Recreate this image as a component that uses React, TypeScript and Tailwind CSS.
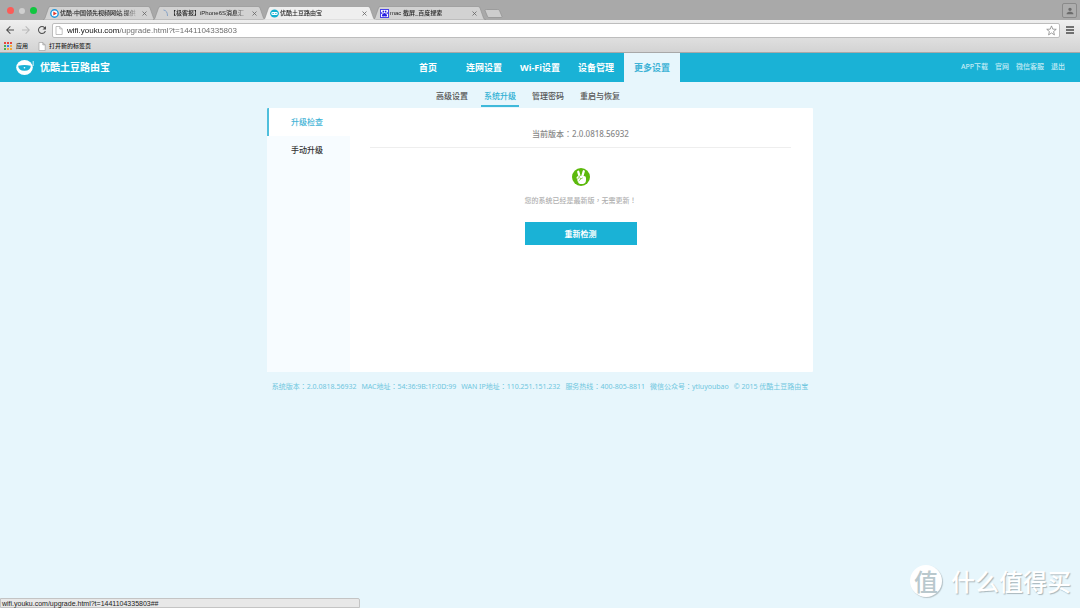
import React from "react";
import type { ReactNode } from "react";
import { MdArrowBack, MdArrowForward, MdRefresh, MdPerson } from "react-icons/md";
import { FaPaw } from "react-icons/fa";

const navItems = ["首页", "连网设置", "Wi-Fi设置", "设备管理", "更多设置"];
const subItems = ["高级设置", "系统升级", "管理密码", "重启与恢复"];
const topLinks = ["APP下载", "官网", "微信客服", "退出"];
const footerItems = [
  ["系统版本", "2.0.0818.56932"],
  ["MAC地址", "54:36:9B:1F:0D:99"],
  ["WAN IP地址", "110.251.151.232"],
  ["服务热线", "400-805-8811"],
  ["微信公众号", "ytluyoubao"],
];
const appDots = [
  "#e8453c", "#e8453c", "#e8453c",
  "#4caf50", "#3f7fe8", "#f2a93b",
  "#4caf50", "#f2a93b", "#f2a93b",
];

/* Punctuation centred in its em box */
function Mark({ children }: { children: string }) {
  return <span className="font-['Noto_Sans_CJK_TC',sans-serif] leading-none">{children}</span>;
}

function RobotFace({ className }: { className: string }) {
  return (
    <svg viewBox="0 0 18 16" className={className} aria-hidden="true">
      <ellipse cx="8.5" cy="7.500" rx="8.3" ry="7.5" fill="#fff" />
      <path d="M17.2 1v5" stroke="#fff" strokeWidth="0.8" />
      <path d="M2.200 5.700Q8.500 4.300 14.800 5.700Q14.600 10.700 8.500 10.700Q2.400 10.700 2.200 5.700Z" fill="#1ab2d6" />
      <circle cx="8.500" cy="7.700" r="0.8" fill="#fff" />
    </svg>
  );
}

function VictoryHand() {
  return (
    <svg viewBox="0 0 36 36" className="mt-5 size-[18px]" aria-hidden="true">
      <circle cx="18" cy="18" r="18" fill="#5cb90c" />
      <path d="M15.500 18L12.500 7.500M20.500 17L23.500 6.500" stroke="#fff" strokeWidth="4.600" strokeLinecap="round" />
      <path d="M9 19.500Q9 16 13 16H24Q28 16 28 20V24Q28 31 22 32H16Q13 31 11.500 27Z" fill="#fff" />
      <path d="M10.500 22.500L14.500 19L18 21.500L14 25.500M18 21.500L21 20M13 18L16.500 15.500" fill="none" stroke="#5cb90c" strokeWidth="1.300" strokeLinecap="round" />
    </svg>
  );
}

function PageIcon() {
  return (
    <svg viewBox="0 0 8 9" className="h-[9px] w-2 shrink-0" aria-hidden="true">
      <path d="M1 .5h3.8l2.4 2.4v5.6H1zM4.8.5v2.4h2.4" fill="#fff" stroke="#999" strokeWidth="0.6" />
    </svg>
  );
}

function Tab({ title, icon, active = false }: { title: string; icon: ReactNode; active?: boolean }) {
  return (
    <div className={`relative -mr-[3px] h-[14px] w-[113px] ${active ? "z-10" : ""}`}>
      <svg viewBox="0 0 113 14" preserveAspectRatio="none" className="absolute inset-0 h-full w-full" aria-hidden="true">
        <path
          d="M0 14Q1.5 13.5 2 12L5.5 2Q6 .5 7.5 .5H105Q106.500 .5 107 2L110.500 12Q111 13.500 113 14Z"
          fill={active ? "#efefef" : "#d2d2d2"}
          stroke="#8f8f8f"
          strokeWidth="0.6"
        />
        {active && <path d="M0 14H113" stroke="#efefef" strokeWidth="1" />}
      </svg>
      <div className="relative flex h-full items-center px-[7px]">
        <span className="flex w-[9px] shrink-0 justify-center">{icon}</span>
        <span className="min-w-0 flex-1 overflow-hidden pl-px text-[6px] leading-[10px] font-medium whitespace-nowrap text-[#222] [mask-image:linear-gradient(to_right,#000_80%,transparent_100%)]">
          {title}
        </span>
        <button aria-label="关闭标签页" className="flex w-[10px] shrink-0 justify-center">
          <svg viewBox="0 0 5 5" className="size-[5px]">
            <path d="M.5 .5L4.500 4.500M4.500 .5L.5 4.500" stroke="#666" strokeWidth="0.8" />
          </svg>
        </button>
      </div>
    </div>
  );
}

function Browser() {
  return (
    <div className="font-['Liberation_Sans','Noto_Sans_CJK_SC',sans-serif]">
      <div className="flex h-5 items-end justify-between bg-[#a9a9a9]">
        <div className="flex items-end">
          <div className="flex h-[19px] w-[43px] items-center gap-[5px] pl-[7px]">
            <span className="size-[7px] rounded-full bg-[#fc5b57]" />
            <span className="size-[6px] rounded-full bg-[#cfcfcf]" />
            <span className="size-[7px] rounded-full bg-[#10c63f]" />
          </div>
          <Tab
            title="优酷-中国领先视频网站,提供"
            icon={
              <svg viewBox="0 0 9 9" className="size-[9px]">
                <circle cx="4.500" cy="4.500" r="3.700" fill="#fff" stroke="#2196dc" strokeWidth="1.4" />
                <path d="M3.300 2.400L6.900 4.500L3.300 6.600Z" fill="#e33b2e" />
              </svg>
            }
          />
          <Tab
            title="【极客报】iPhone6S消息汇"
            icon={
              <svg viewBox="0 0 9 9" className="size-[9px]">
                <path d="M3.500 1Q7.500 1.500 7.500 7" fill="none" stroke="#7d9cc4" strokeWidth="0.900" />
              </svg>
            }
          />
          <Tab
            active
            title="优酷土豆路由宝"
            icon={
              <svg viewBox="0 0 9 9" className="size-[9px]">
                <ellipse cx="4.500" cy="4.500" rx="4.400" ry="4" fill="#12b0cf" />
                <rect x="1.300" y="3" width="6.400" height="3" rx="1.300" fill="#fff" />
                <path d="M2.500 4.500h1.300M5.200 4.500h1.300" stroke="#12b0cf" strokeWidth="0.900" />
              </svg>
            }
          />
          <Tab
            title="mac 截屏_百度搜索"
            icon={
              <span className="flex size-[9px] items-center justify-center border border-[#4a43e8] bg-white">
                <FaPaw className="size-[7px] text-[#2a22e0]" />
              </span>
            }
          />
          <button aria-label="新标签页" className="mb-[2px] ml-px">
            <svg viewBox="0 0 19 9" className="h-[9px] w-[19px]">
              <path d="M2.500 .5H13.500Q15 .5 15.500 1.500L18 7.500Q18 8.500 17 8.500H5Q4 8.500 3.500 7.500L1 1.500Q1 .5 2.500 .5Z" fill="#cdcdcd" stroke="#8f8f8f" strokeWidth="0.7" />
            </svg>
          </button>
        </div>
        <button
          aria-label="用户"
          className="mr-[3px] mb-[2px] flex h-[15px] w-[15px] items-center justify-center rounded-[2px] border border-[#8a8a8a] bg-[#adadad]"
        >
          <MdPerson className="size-[10px] text-[#6c6c6c]" />
        </button>
      </div>

      <div className="border-b border-[#a8a8a8] bg-linear-to-b from-[#efefef] to-[#d3d3d3]">
        <div className="flex h-5 items-center pr-[6px] pl-1">
          <button aria-label="后退" className="w-4"><MdArrowBack className="size-3 text-[#4d4d4d]" /></button>
          <button aria-label="前进" className="w-4"><MdArrowForward className="size-3 text-[#b9b9b9]" /></button>
          <button aria-label="重新加载" className="w-4"><MdRefresh className="size-3 text-[#4d4d4d]" /></button>
          <div className="flex h-[15px] min-w-0 flex-1 items-center rounded-[2px] border border-[#bdbdbd] bg-white px-[2px]">
            <PageIcon />
            <input
              aria-label="地址"
              defaultValue="wifi.youku.com/upgrade.html?t=1441104335803"
              className="h-[13px] min-w-0 flex-1 bg-linear-to-r from-[#111] from-[57px] to-[#666] to-[57px] bg-clip-text pl-1 text-[8px] text-transparent outline-none"
            />
            <button aria-label="收藏">
              <svg viewBox="0 0 12 12" className="size-[11px]">
                <path d="M6 1L7.400 4.500L11.200 4.700L8.300 7.100L9.200 10.800L6 8.700L2.800 10.800L3.700 7.100L.8 4.700L4.600 4.500Z" fill="#fff" stroke="#808080" strokeWidth="0.800" />
              </svg>
            </button>
          </div>
          <button aria-label="菜单" className="ml-[6px]">
            <svg viewBox="0 0 8 8" className="size-2">
              <path d="M0 1h8M0 4h8M0 7h8" stroke="#4a4a4a" strokeWidth="1.600" />
            </svg>
          </button>
        </div>
        <div className="flex h-3 items-center gap-[10px] pl-1 text-[6px] leading-[10px] font-medium text-[#222]">
          <a href="#apps" className="flex items-center gap-1">
            <svg viewBox="0 0 8 8" className="size-2">
              {appDots.map((c, i) => (
                <rect key={i} x={(i % 3) * 3} y={Math.floor(i / 3) * 3} width="2" height="2" fill={c} />
              ))}
            </svg>
            应用
          </a>
          <a href="#newtab" className="flex items-center gap-[3px]">
            <PageIcon />
            打开新的标签页
          </a>
        </div>
      </div>
    </div>
  );
}

export default function App() {
  return (
    <div className="relative flex min-h-screen flex-col bg-[#e7f6fc] font-['Noto_Sans','Noto_Sans_CJK_SC',sans-serif]">
      <Browser />

      <header className="grid h-[29px] grid-cols-[1fr_auto_1fr] items-center bg-[#1ab2d6] text-white">
        <div className="flex items-center gap-[6px] pl-4">
          <RobotFace className="h-4 w-[18px]" />
          <h1 className="text-[10px] font-bold">优酷土豆路由宝</h1>
        </div>
        <nav className="flex h-full text-[9px] font-bold">
          {navItems.map((t, i) => (
            <a
              key={t}
              href="#nav"
              className={`flex w-14 items-center justify-center ${i === 4 ? "bg-[#e7f6fc] text-[#3fb3d6]" : ""}`}
            >
              {t}
            </a>
          ))}
        </nav>
        <div className="flex justify-end gap-[7px] pr-[15px] text-[7px] font-medium text-[#c4ecf5]">
          {topLinks.map((t) => (
            <a key={t} href="#top">{t}</a>
          ))}
        </div>
      </header>

      <nav className="flex h-[25px] justify-center gap-[10px] pr-6 text-[8px] font-medium text-[#555]">
        {subItems.map((t, i) => (
          <a
            key={t}
            href="#sub"
            className={`flex items-center border-b-2 px-[3px] pt-1 ${i === 1 ? "border-[#3fb9da] text-[#2cafd3]" : "border-transparent"}`}
          >
            {t}
          </a>
        ))}
      </nav>

      <main className="mx-auto mt-px flex min-h-[264px] w-full max-w-[546px] overflow-hidden rounded-[1px] bg-white">
        <aside className="w-[83px] shrink-0 bg-[#f7fcff] text-[8px] font-medium">
          <a href="#check" className="flex h-7 items-center border-l-2 border-[#4fbfdc] bg-white pl-[22px] text-[#3fb3d6]">升级检查</a>
          <a href="#manual" className="flex h-7 items-center border-l-2 border-transparent pl-[22px] text-[#333]">手动升级</a>
        </aside>
        <section className="flex flex-1 flex-col items-center pr-[22px] pl-5">
          <p className="flex h-10 w-full items-end justify-center border-b border-[#eeeeee] pb-[7px] text-[8px] leading-3 font-medium text-[#888]">
            <span>当前版本<Mark>：</Mark>2.0.0818.56932</span>
          </p>
          <VictoryHand />
          <p className="mt-[9px] text-[7px] leading-3 font-medium text-[#b0b0b0]">
            您的系统已经是最新版<Mark>，</Mark>无需更新<Mark>！</Mark>
          </p>
          <button className="mt-[15px] h-[23px] w-28 bg-[#1ab2d6] text-[8px] font-bold text-white">重新检测</button>
        </section>
      </main>

      <footer className="mt-[9px] flex justify-center gap-[5px] text-[7px] leading-3 text-[#6fc6de]">
        {footerItems.map(([label, value]) => (
          <span key={label}>{label}<Mark>：</Mark>{value}</span>
        ))}
        <span>© 2015 优酷土豆路由宝</span>
      </footer>

      <div className="absolute right-[9px] bottom-[11px] flex items-center gap-[9px] font-['Noto_Sans_CJK_SC',sans-serif] font-medium">
        <span className="flex size-8 items-center justify-center rounded-full bg-white text-[24px] leading-7 text-[#b9c8cd] shadow-[1px_1px_1px_#b5c2c7]">
          值
        </span>
        <span className="text-[24px] leading-8 text-white [text-shadow:1px_1px_1px_#a9b7bc]">什么值得买</span>
      </div>

      <div className="absolute bottom-0 left-0 h-[10px] w-1/3 rounded-tr-[2px] border border-[#c4c4c4] bg-[#e8e8e8] pl-px font-['Liberation_Sans',sans-serif] text-[7px] leading-[9px] text-[#222]">
        wifi.youku.com/upgrade.html?t=1441104335803##
      </div>
    </div>
  );
}
